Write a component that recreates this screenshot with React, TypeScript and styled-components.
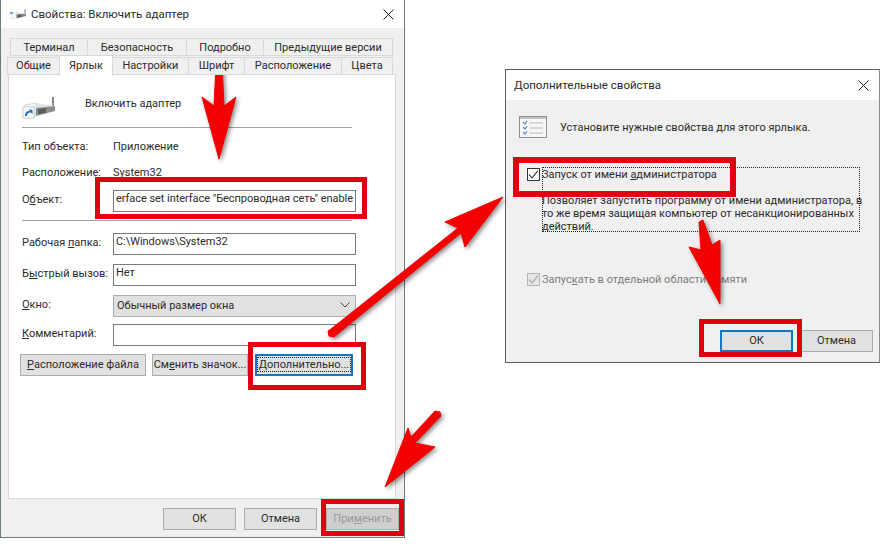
import React from "react";
import styled, { createGlobalStyle } from "styled-components";

const GlobalStyle = createGlobalStyle`
  html, body {
    margin: 0;
    background: #fff;
    font-family: Roboto, "Noto Sans", "Noto Sans CJK SC", sans-serif;
    font-size: 11px;
    color: #2b2b2b;
  }
`;

const Desktop = styled.div`
  position: relative;
  width: 891px;
  height: 547px;
  overflow: hidden;
  display: flex;
  align-items: flex-start;
`;

const PropertiesWindow = styled.div`
  width: 405px;
  height: 538px;
  box-sizing: border-box;
  background: #f0f0f0;
  border: 1px solid #6b7a7c;
  border-top: none;
  display: flex;
  flex-direction: column;
`;

const AdvancedWindow = styled.div`
  width: 375px;
  height: 294px;
  box-sizing: border-box;
  margin: 69px 0 0 100px;
  background: #f0f0f0;
  border: 1px solid #5c5c5c;
  border-right-color: #8a8a8a;
  display: flex;
  flex-direction: column;
`;

const TitleBar = styled.div<{ $height: number; $pad: number }>`
  flex: none;
  height: ${(p) => p.$height}px;
  background: #fff;
  display: flex;
  align-items: center;
  gap: 4px;
  padding: 0 10px 0 ${(p) => p.$pad}px;
`;

const TitleText = styled.span`
  flex: 1;
  font-size: 11.5px;
`;

const TabStrip = styled.div`
  padding: 10px 9px 0 7px;
`;

const TabRow = styled.div<{ $inset: number }>`
  display: flex;
  height: ${(p) => (p.$inset ? 19 : 17)}px;
  margin-left: ${(p) => p.$inset}px;
`;

const Tab = styled.div<{ $width: number; $active?: boolean; $upper?: boolean }>`
  position: relative;
  z-index: ${(p) => (p.$active ? 2 : 1)};
  box-sizing: border-box;
  width: ${(p) => p.$width}px;
  height: ${(p) => (p.$active ? 21 : 18)}px;
  margin-top: ${(p) => (p.$active ? -2 : 0)}px;
  padding-bottom: ${(p) => (p.$upper ? 0 : 1)}px;
  display: flex;
  align-items: center;
  justify-content: center;
  background: ${(p) => (p.$active ? "#fff" : "#f0f0f0")};
  border: 1px solid #d9d9d9;
  border-bottom: ${(p) => (p.$active ? "none" : "1px solid #d9d9d9")};
  margin-left: -1px;
`;

const TabPanel = styled.div`
  flex: none;
  box-sizing: border-box;
  width: 388px;
  height: 425px;
  margin-left: 7px;
  background: #fff;
  border: 1px solid #d9d9d9;
  padding: 20px 0 0 13px;
`;

const ShortcutHeader = styled.div`
  display: flex;
  align-items: flex-start;
  height: 24px;
`;

const ShortcutName = styled.span`
  margin-left: 29px;
  line-height: 17px;
`;

const Divider = styled.div<{ $top: number }>`
  width: 330px;
  height: 1px;
  background: #a0a0a0;
  margin-top: ${(p) => p.$top}px;
`;

const FieldRow = styled.div<{ $top: number }>`
  display: grid;
  grid-template-columns: 91px 243px;
  align-items: center;
  height: 22px;
  margin-top: ${(p) => p.$top}px;
`;

const FieldLabel = styled.span`
  white-space: nowrap;
  margin-top: -4px;
`;

const FieldBox = styled.div`
  box-sizing: border-box;
  height: 22px;
  padding: 0 2px;
  border: 1px solid #7a7a7a;
  background: #fff;
  line-height: 16px;
  letter-spacing: -0.05px;
  white-space: nowrap;
  overflow: hidden;
`;

const ComboBox = styled.div`
  box-sizing: border-box;
  height: 22px;
  padding: 0 5px 2px 3px;
  border: 1px solid #adadad;
  background: #e1e1e1;
  display: flex;
  align-items: center;
  justify-content: space-between;
`;

const ButtonRow = styled.div`
  display: flex;
  margin: 8px 0 0 -2px;
`;

const Button = styled.div<{
  $width: number;
  $gap?: number;
  $focused?: boolean;
  $disabled?: boolean;
}>`
  box-sizing: border-box;
  width: ${(p) => p.$width}px;
  height: 22px;
  margin-left: ${(p) => p.$gap ?? 0}px;
  padding-bottom: 2px;
  display: flex;
  align-items: center;
  justify-content: center;
  white-space: nowrap;
  background: ${(p) => (p.$disabled ? "#cfcfcf" : "#e1e1e1")};
  color: ${(p) => (p.$disabled ? "#9a9a9a" : "#2b2b2b")};
  border: ${(p) => (p.$focused ? "2px solid #0f78c6" : "1px solid #adadad")};
`;

const FocusLabel = styled.span`
  outline: 1px dotted #222;
  outline-offset: 0;
  padding: 0 1px;
`;

const WindowFooter = styled.div`
  display: flex;
  justify-content: flex-end;
  padding: 9px 5px 0 0;
`;

const DialogBody = styled.div`
  padding: 16px 6px 0 13px;
  display: flex;
  flex-direction: column;
  flex: 1;
`;

const DialogHeader = styled.div`
  display: flex;
  align-items: center;
  gap: 13px;
  height: 22px;
`;

const OptionRow = styled.div<{ $top: number; $muted?: boolean }>`
  display: grid;
  grid-template-columns: 15px 318px;
  margin: ${(p) => p.$top}px 0 0 8px;
  color: ${(p) => (p.$muted ? "#7d7d7d" : "inherit")};
`;

const CheckBox = styled.div<{ $muted?: boolean }>`
  box-sizing: border-box;
  width: 13px;
  height: 13px;
  margin-top: 1px;
  border: 1px solid ${(p) => (p.$muted ? "#b5b5b5" : "#333")};
  background: ${(p) => (p.$muted ? "#e6e6e6" : "#fff")};
  display: flex;
  align-items: center;
  justify-content: center;
`;

const OptionBlock = styled.div`
  box-sizing: border-box;
  height: 65px;
  outline: 1px dotted #222;
  outline-offset: -1px;
  line-height: 13px;
  white-space: nowrap;
`;

const OptionTitle = styled.div`
  height: 27px;
  padding-top: 1px;
  margin-bottom: -1px;
`;

const OptionText = styled.span`
  line-height: 15px;
`;

const DialogFooter = styled.div`
  display: flex;
  justify-content: flex-end;
  margin-top: auto;
  padding-bottom: 10px;
`;

const Key = styled.span`
  text-decoration: underline;
`;

const RedFrame = styled.div<{ $x: number; $y: number; $w: number; $h: number; $t?: number }>`
  position: absolute;
  left: ${(p) => p.$x}px;
  top: ${(p) => p.$y}px;
  width: ${(p) => p.$w}px;
  height: ${(p) => p.$h}px;
  box-sizing: border-box;
  border: ${(p) => p.$t ?? 5}px solid #e1000f;
`;

const ArrowLayer = styled.svg`
  position: absolute;
  left: 0;
  top: 0;
  width: 891px;
  height: 547px;
  pointer-events: none;
  filter: drop-shadow(2px 2px 2px rgba(0, 0, 0, 0.45));
`;

const CloseIcon = () => (
  <svg width="11" height="11" viewBox="0 0 11 11">
    <path d="M0.5 0.5 L10.5 10.5 M10.5 0.5 L0.5 10.5" stroke="#222" strokeWidth="1" fill="none" />
  </svg>
);

const Chevron = () => (
  <svg width="10" height="6" viewBox="0 0 10 6">
    <path d="M0.5 0.5 L5 5 L9.5 0.5" stroke="#444" strokeWidth="1" fill="none" />
  </svg>
);

const Tick = ({ color }: { color: string }) => (
  <svg width="11" height="11" viewBox="0 0 11 11">
    <path d="M1 5.5 L4 9 L10 1.5" stroke={color} strokeWidth="1.1" fill="none" />
  </svg>
);

const AdapterIcon = ({ small }: { small?: boolean }) => (
  <svg width={small ? 18 : 34} height={small ? 12 : 24} viewBox="0 0 34 24">
    <path d="M31 2 V11" stroke="#555" strokeWidth="1.4" />
    <path d="M3 10 L14 8 L33 11 L14 16 Z" fill="#e4e4e4" />
    <path d="M3 10 L14 8 L14 21 L3 22 Z" fill="#f4f4f4" stroke="#bbb" strokeWidth="0.5" />
    <path d="M14 13 L33 11 V16 L14 21 Z" fill="#8d8d8d" />
    <path d="M16 14 L24 13 V18 L16 19 Z" fill="#5e5e5e" />
    {small ? (
      <path d="M1 8 H7 V12 H1 Z" fill="#7aa0c4" />
    ) : (
      <>
        <rect x="1" y="12" width="11" height="11" fill="#fff" stroke="#9aa" strokeWidth="0.6" />
        <path d="M3 21 C3 17 5 16 8 16 L6.5 14 L10.5 15 L10.5 19 L9 17.5 C6.5 17.5 5 18.5 5 21 Z" fill="#1f6fc4" />
      </>
    )}
  </svg>
);

const ChecklistIcon = () => (
  <svg width="28" height="22" viewBox="0 0 28 22">
    <rect x="0.5" y="0.5" width="27" height="21" fill="#f7f7f7" stroke="#8f8f8f" />
    <rect x="1" y="1" width="26" height="2" fill="#c4c4c4" />
    <path d="M4 6 L6 8 L8 5 M4 11 L6 13 L8 10 M4 16 L6 18 L8 15" stroke="#5b8fc4" strokeWidth="1.2" fill="none" />
    <path d="M11 7 H24 M11 12 H24 M11 17 H24" stroke="#bcbcbc" strokeWidth="1" />
  </svg>
);

const App = () => (
  <>
    <GlobalStyle />
    <Desktop>
      <PropertiesWindow>
        <TitleBar $height={28} $pad={8}>
          <AdapterIcon small />
          <TitleText>Свойства: Включить адаптер</TitleText>
          <CloseIcon />
        </TitleBar>
        <TabStrip>
          <TabRow $inset={3}>
            <Tab $upper $width={78}>Терминал</Tab>
            <Tab $upper $width={100}>Безопасность</Tab>
            <Tab $upper $width={78}>Подробно</Tab>
            <Tab $upper $width={130}>Предыдущие версии</Tab>
          </TabRow>
          <TabRow $inset={0}>
            <Tab $width={53}>Общие</Tab>
            <Tab $width={54} $active>Ярлык</Tab>
            <Tab $width={77}>Настройки</Tab>
            <Tab $width={57}>Шрифт</Tab>
            <Tab $width={98}>Расположение</Tab>
            <Tab $width={52}>Цвета</Tab>
          </TabRow>
        </TabStrip>
        <TabPanel>
          <ShortcutHeader>
            <AdapterIcon />
            <ShortcutName>Включить адаптер</ShortcutName>
          </ShortcutHeader>
          <Divider $top={8} />
          <FieldRow $top={9}>
            <FieldLabel>Тип объекта:</FieldLabel>
            <FieldLabel>Приложение</FieldLabel>
          </FieldRow>
          <FieldRow $top={4}>
            <FieldLabel>Расположение:</FieldLabel>
            <FieldLabel>System32</FieldLabel>
          </FieldRow>
          <FieldRow $top={5}>
            <FieldLabel>О<Key>б</Key>ъект:</FieldLabel>
            <FieldBox>erface set interface "Беспроводная сеть" enable</FieldBox>
          </FieldRow>
          <Divider $top={8} />
          <FieldRow $top={12}>
            <FieldLabel>Рабочая <Key>п</Key>апка:</FieldLabel>
            <FieldBox>C:\Windows\System32</FieldBox>
          </FieldRow>
          <FieldRow $top={9}>
            <FieldLabel>Б<Key>ы</Key>стрый вызов:</FieldLabel>
            <FieldBox>Нет</FieldBox>
          </FieldRow>
          <FieldRow $top={9}>
            <FieldLabel><Key>О</Key>кно:</FieldLabel>
            <ComboBox>Обычный размер окна<Chevron /></ComboBox>
          </FieldRow>
          <FieldRow $top={7}>
            <FieldLabel><Key>К</Key>омментарий:</FieldLabel>
            <FieldBox />
          </FieldRow>
          <ButtonRow>
            <Button $width={126}><Key>Р</Key>асположение файла</Button>
            <Button $width={96} $gap={6}>См<Key>е</Key>нить значок...</Button>
            <Button $width={98} $gap={7} $focused>
              <FocusLabel><Key>Д</Key>ополнительно...</FocusLabel>
            </Button>
          </ButtonRow>
        </TabPanel>
        <WindowFooter>
          <Button $width={73}>ОК</Button>
          <Button $width={73} $gap={8}>Отмена</Button>
          <Button $width={73} $gap={9} $disabled>При<Key>м</Key>енить</Button>
        </WindowFooter>
      </PropertiesWindow>

      <AdvancedWindow>
        <TitleBar $height={30} $pad={8}>
          <TitleText>Дополнительные свойства</TitleText>
          <CloseIcon />
        </TitleBar>
        <DialogBody>
          <DialogHeader>
            <ChecklistIcon />
            <span>Установите нужные свойства для этого ярлыка.</span>
          </DialogHeader>
          <OptionRow $top={29}>
            <CheckBox><Tick color="#222" /></CheckBox>
            <OptionBlock>
              <OptionTitle>Запуск от имени <Key>а</Key>дминистратора</OptionTitle>
              Позволяет запустить программу от имени администратора, в<br />
              то же время защищая компьютер от несанкционированных<br />
              действий.
            </OptionBlock>
          </OptionRow>
          <OptionRow $top={40} $muted>
            <CheckBox $muted><Tick color="#a0a0a0" /></CheckBox>
            <OptionText>Запус<Key>к</Key>ать в отдельной области памяти</OptionText>
          </OptionRow>
          <DialogFooter>
            <Button $width={73} $focused>ОК</Button>
            <Button $width={73} $gap={7}>Отмена</Button>
          </DialogFooter>
        </DialogBody>
      </AdvancedWindow>

      <RedFrame $x={95} $y={177} $w={272} $h={42} />
      <RedFrame $x={248} $y={342} $w={118} $h={48} />
      <RedFrame $x={321} $y={499} $w={83} $h={37} />
      <RedFrame $x={513} $y={157} $w={223} $h={40} $t={6} />
      <RedFrame $x={699} $y={319} $w={103} $h={38} />

      <ArrowLayer viewBox="0 0 891 547">
        <g fill="#f50000" stroke="#f50000" strokeWidth="1" strokeLinejoin="round">
          <polygon points="216,65 222,65 224,106 236,97 219,159 202,97 214,106" />
          <polygon points="328,331 331,329 458,228 445,222 503,197 465,247 461,233 334,337 329,336" />
          <polygon points="699,222 703,220 712,245 720,240 720,304 689,247 701,250" />
          <polygon points="435,411 440,412 441,416 415,443 435,447 385,487 408,428 411,437" />
        </g>
      </ArrowLayer>
    </Desktop>
  </>
);

export default App;
